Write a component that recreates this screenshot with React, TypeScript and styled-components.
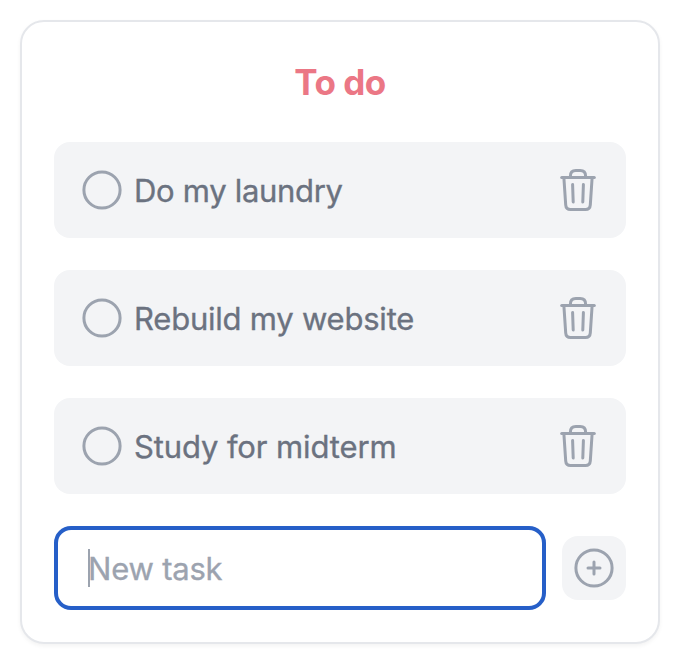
import React from "react";
import styled, { createGlobalStyle } from "styled-components";

const GlobalStyle = createGlobalStyle`
  * { box-sizing: border-box; }
  body {
    margin: 0;
    background: #fff;
    font-family: Inter, "Liberation Sans", sans-serif;
  }
`;

const Page = styled.main`
  width: 676px;
  height: 666px;
  padding: 20px 16px 22px 20px;
  overflow: hidden;
`;

const Card = styled.section`
  display: flex;
  flex-direction: column;
  width: 640px;
  height: 624px;
  padding: 32px;
  border: 2px solid #e5e7eb;
  border-radius: 24px;
  background: #fff;
  box-shadow: 0 2px 4px rgba(0, 0, 0, 0.05);
`;

const Title = styled.h1`
  margin: 0;
  height: 56px;
  line-height: 56px;
  text-align: center;
  font-size: 35px;
  font-weight: 700;
  letter-spacing: -0.5px;
  color: #eb7785;
`;

const List = styled.ul`
  display: flex;
  flex-direction: column;
  gap: 32px;
  margin: 32px 0;
  padding: 0;
  list-style: none;
`;

const Row = styled.li`
  display: flex;
  align-items: center;
  height: 96px;
  padding: 0 30px 0 28px;
  border-radius: 16px;
  background: #f3f4f6;
`;

const Label = styled.span<{ $tracking: number }>`
  flex: 1;
  margin-left: 12px;
  padding-top: 2px;
  font-size: 31px;
  font-weight: 400;
  -webkit-text-stroke: 0.35px currentColor;
  line-height: 48px;
  letter-spacing: ${(p) => p.$tracking}px;
  white-space: nowrap;
  color: #6b7280;
`;

const IconButton = styled.button`
  display: flex;
  padding: 0;
  border: 0;
  background: none;
  color: #9ca3af;
`;

const Form = styled.div`
  display: flex;
  align-items: center;
  gap: 16px;
`;

const Field = styled.div`
  display: flex;
  align-items: center;
  width: 492px;
  height: 84px;
  padding-left: 30px;
  border: 4px solid #265fc8;
  border-radius: 17px;
`;

const Caret = styled.span`
  width: 2px;
  height: 38px;
  margin-right: -2px;
  background: #9ca3af;
`;

const Placeholder = styled.span`
  padding-top: 2px;
  font-size: 31px;
  font-weight: 400;
  -webkit-text-stroke: 0.35px currentColor;
  line-height: 48px;
  letter-spacing: -0.2px;
  color: #9ca3af;
`;

const AddButton = styled(IconButton)`
  width: 64px;
  height: 64px;
  align-items: center;
  justify-content: center;
  border-radius: 16px;
  background: #f3f4f6;
`;

const TrashIcon = () => (
  <svg width="36" height="44" viewBox="0 0 36 44" fill="none" stroke="currentColor" strokeWidth="3" strokeLinecap="round" strokeLinejoin="round">
    <path d="M1.7 9.6H34.3" />
    <path d="M10.4 9V8C10.4 4.4 12.4 2.4 15.8 2.4H20.2C23.6 2.4 25.6 4.4 25.6 8V9" />
    <path d="M3.9 10L5.7 36.8Q6 41.5 10.6 41.5H25.4Q30 41.5 30.3 36.8L32.1 10" />
    <path d="M12.6 16.5L13.2 34M23.4 16.5L22.8 34" />
  </svg>
);

const CircleIcon = () => (
  <svg width="40" height="40" viewBox="0 0 40 40" fill="none" stroke="#9ca3af" strokeWidth="3">
    <circle cx="20" cy="20" r="18.1" />
  </svg>
);

const PlusIcon = () => (
  <svg width="40" height="40" viewBox="0 0 40 40" fill="none" stroke="currentColor" strokeWidth="3" strokeLinecap="round">
    <circle cx="20" cy="20" r="18.1" />
    <path d="M20 14V26M14 20H26" />
  </svg>
);

const tasks = [
  { text: "Do my laundry", tracking: -0.3 },
  { text: "Rebuild my website", tracking: -0.22 },
  { text: "Study for midterm", tracking: -0.12 },
];

export default function App() {
  return (
    <Page>
      <GlobalStyle />
      <Card>
        <Title>To do</Title>
        <List>
          {tasks.map((task) => (
            <Row key={task.text}>
              <CircleIcon />
              <Label $tracking={task.tracking}>{task.text}</Label>
              <IconButton aria-label="Delete task">
                <TrashIcon />
              </IconButton>
            </Row>
          ))}
        </List>
        <Form>
          <Field>
            <Caret />
            <Placeholder>New task</Placeholder>
          </Field>
          <AddButton aria-label="Add task">
            <PlusIcon />
          </AddButton>
        </Form>
      </Card>
    </Page>
  );
}
